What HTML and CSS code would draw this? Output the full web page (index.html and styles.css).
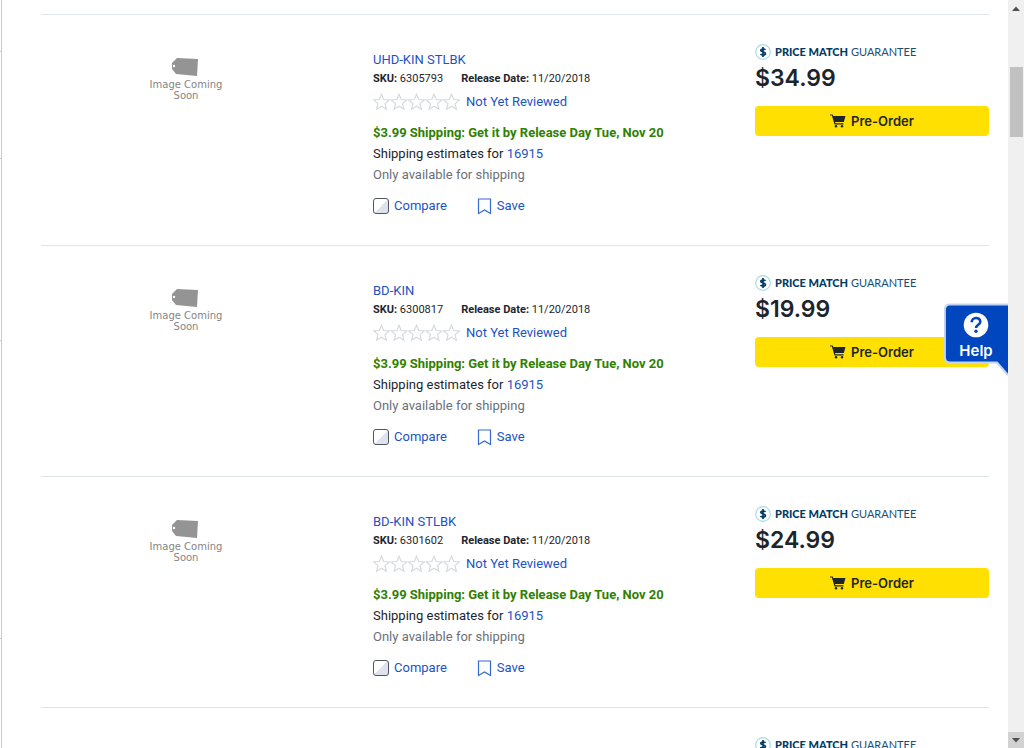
FILE: index.html
```
<!DOCTYPE html>
<html lang="en">
<head>
<meta charset="utf-8">
<title>Search results</title>
<link rel="stylesheet" href="styles.css">
</head>
<body>
<svg class="sprite" aria-hidden="true">
  <symbol id="tag" viewBox="0 0 28 20"><path d="M6 1 27 2 26 19 5 17 1 12 1 6Z" fill="#949494"/><circle cx="3" cy="9" r="1.2" fill="#fff"/></symbol>
  <symbol id="stars" viewBox="0 0 88 18">
    <g fill="#fff" stroke="#d5d9e2" stroke-width="1.2">
      <path id="star" d="M8.5 1.2 10.7 6.5 16.3 6.9 12 10.6 13.4 16.3 8.5 13.2 3.6 16.3 5 10.6 .7 6.9 6.3 6.5Z"/>
      <use href="#star" x="17.5"/><use href="#star" x="35"/><use href="#star" x="52.5"/><use href="#star" x="70"/>
    </g>
  </symbol>
  <symbol id="bookmark" viewBox="0 0 15 17"><path d="M1.5 1H13.5V15.5L7.5 12 1.5 15.5Z" fill="none" stroke="#3569cf" stroke-width="1.2"/></symbol>
  <symbol id="cart" viewBox="0 0 16 14"><path d="M0 .5H2.7L3.3 2H15.5L13.8 8H5L5.4 9.3H13.5V10.4H4.5L1.9 1.6H0Z" fill="#1d252c"/><circle cx="6" cy="12.3" r="1.2" fill="#1d252c"/><circle cx="12" cy="12.3" r="1.2" fill="#1d252c"/></symbol>
  <symbol id="dollar" viewBox="0 0 16 16"><circle cx="8" cy="8" r="7.3" fill="#fff" stroke="#a9dce6" stroke-width="1.2"/><path d="M10.4 5.9C9.8 4.7 5.8 4.5 5.8 6.5 5.8 8.3 10.4 7.5 10.4 9.5 10.4 11.5 6.3 11.2 5.5 10M8 3V13" fill="none" stroke="#003b64" stroke-width="1.7"/></symbol>
</svg>
<div class="window">
  <aside class="edge"><i></i><i></i><i></i><i></i></aside>
  <main class="results">
    <article class="product">
      <div class="picture"><svg class="tag"><use href="#tag"/></svg><span>Image Coming<br>Soon</span></div>
      <div class="details">
        <a class="title" href="#">UHD-KIN STLBK</a>
        <p class="meta"><span><b>SKU:</b> 6305793</span><span><b>Release Date:</b> 11/20/2018</span></p>
        <div class="rating"><svg class="stars"><use href="#stars"/></svg><a href="#">Not Yet Reviewed</a></div>
        <div class="shipping"><p class="offer">$3.99 Shipping: Get it by Release Day Tue, Nov 20</p><p>Shipping estimates for <a href="#">16915</a></p><p class="muted">Only available for shipping</p></div>
        <div class="actions"><label class="compare"><input type="checkbox">Compare</label><button class="save" type="button"><svg class="bookmark"><use href="#bookmark"/></svg>Save</button></div>
      </div>
      <div class="buy">
        <div class="match"><svg class="dollar"><use href="#dollar"/></svg><span><b>PRICE MATCH</b> GUARANTEE</span></div>
        <div class="price">$34.99</div>
        <button class="order" type="button"><svg class="cart"><use href="#cart"/></svg>Pre-Order</button>
      </div>
    </article>
    <article class="product">
      <div class="picture"><svg class="tag"><use href="#tag"/></svg><span>Image Coming<br>Soon</span></div>
      <div class="details">
        <a class="title" href="#">BD-KIN</a>
        <p class="meta"><span><b>SKU:</b> 6300817</span><span><b>Release Date:</b> 11/20/2018</span></p>
        <div class="rating"><svg class="stars"><use href="#stars"/></svg><a href="#">Not Yet Reviewed</a></div>
        <div class="shipping"><p class="offer">$3.99 Shipping: Get it by Release Day Tue, Nov 20</p><p>Shipping estimates for <a href="#">16915</a></p><p class="muted">Only available for shipping</p></div>
        <div class="actions"><label class="compare"><input type="checkbox">Compare</label><button class="save" type="button"><svg class="bookmark"><use href="#bookmark"/></svg>Save</button></div>
      </div>
      <div class="buy">
        <div class="match"><svg class="dollar"><use href="#dollar"/></svg><span><b>PRICE MATCH</b> GUARANTEE</span></div>
        <div class="price">$19.99</div>
        <button class="order" type="button"><svg class="cart"><use href="#cart"/></svg>Pre-Order</button>
      </div>
    </article>
    <article class="product">
      <div class="picture"><svg class="tag"><use href="#tag"/></svg><span>Image Coming<br>Soon</span></div>
      <div class="details">
        <a class="title" href="#">BD-KIN STLBK</a>
        <p class="meta"><span><b>SKU:</b> 6301602</span><span><b>Release Date:</b> 11/20/2018</span></p>
        <div class="rating"><svg class="stars"><use href="#stars"/></svg><a href="#">Not Yet Reviewed</a></div>
        <div class="shipping"><p class="offer">$3.99 Shipping: Get it by Release Day Tue, Nov 20</p><p>Shipping estimates for <a href="#">16915</a></p><p class="muted">Only available for shipping</p></div>
        <div class="actions"><label class="compare"><input type="checkbox">Compare</label><button class="save" type="button"><svg class="bookmark"><use href="#bookmark"/></svg>Save</button></div>
      </div>
      <div class="buy">
        <div class="match"><svg class="dollar"><use href="#dollar"/></svg><span><b>PRICE MATCH</b> GUARANTEE</span></div>
        <div class="price">$24.99</div>
        <button class="order" type="button"><svg class="cart"><use href="#cart"/></svg>Pre-Order</button>
      </div>
    </article>
    <article class="product">
      <div></div>
      <div></div>
      <div class="buy">
        <div class="match"><svg class="dollar"><use href="#dollar"/></svg><span><b>PRICE MATCH</b> GUARANTEE</span></div>
      </div>
    </article>
  </main>
  <div class="scrollbar" aria-hidden="true">
    <svg class="arrow" viewBox="0 0 16 16"><path d="M4 11 8 6.5 12 11Z" fill="#505050"/></svg>
    <div class="thumb"></div>
    <svg class="arrow down" viewBox="0 0 16 16"><path d="M4 6 8 10.5 12 6Z" fill="#505050"/></svg>
  </div>
  <button class="help" type="button">
    <svg class="bubble" viewBox="0 0 64 76" aria-hidden="true"><path d="M64 1.5H6Q.9 1.5 .9 7V54Q.9 59.5 6 59.5H53L64 72" fill="#0046be" stroke="#c3d5f0" stroke-width="2"/></svg>
    <svg class="question" viewBox="0 0 26 26" aria-hidden="true"><circle cx="13" cy="13" r="12.3" fill="#fff"/><path d="M8.7 10.3C8.7 4.7 17.3 4.7 17.3 9.7 17.3 12.7 13 12.7 13 16" fill="none" stroke="#0046be" stroke-width="2.6"/><circle cx="13" cy="19.3" r="1.7" fill="#0046be"/></svg>
    <span>Help</span>
  </button>
</div>
</body>
</html>
```
FILE: styles.css
```
* { box-sizing: border-box; }
body { margin: 0; background: #fff; color: #1d252c; font: 13px/20px Inter, "Liberation Sans", sans-serif; }
p { margin: 0; }
a { color: #1d52c4; text-decoration: none; }
button { border: 0; padding: 0; background: none; font: inherit; cursor: pointer; }
svg { display: block; flex: none; }
.sprite { position: absolute; width: 0; height: 0; }
.window { position: relative; display: flex; height: 100vh; overflow: hidden; }
.edge { width: 2px; border-right: 1px solid #c5cbd5; display: grid; grid-template-rows: 52px 107px 182px 298px; align-content: start; }
.edge i { border-bottom: 1px solid #c5cbd5; }
.results { flex: 1; min-width: 0; padding: 14px 19px 0 39px; }
.product { display: grid; grid-template-columns: 290fr 340fr 234fr; column-gap: 42px; border-top: 1px solid #dfe4eb; padding: 29px 0; }
.picture { display: flex; flex-direction: column; align-items: center; padding-top: 13px; color: #858585; font: 10px/11px "DejaVu Sans", sans-serif; text-align: center; }
.tag { width: 28px; height: 20px; margin: 0 2px 2px 0; }
.details { padding-top: 7px; white-space: nowrap; font-family: Roboto, "Liberation Sans", sans-serif; }
.title { display: block; line-height: 18px; }
.meta { display: flex; gap: 18px; margin-top: 2px; font-size: 11px; line-height: 16px; }
.meta b { font-weight: 700; }
.rating { display: flex; align-items: center; gap: 5px; margin-top: 5px; }
.stars { width: 88px; height: 18px; }
.shipping { margin-top: 10px; line-height: 21px; }
.offer { color: #318000; font-weight: 700; }
.muted { color: #6b7178; }
.actions { display: flex; align-items: center; gap: 30px; margin-top: 11px; height: 20px; color: #1d52c4; }
.compare, .save { display: flex; align-items: center; gap: 5px; color: inherit; }
.compare input { appearance: none; width: 16px; height: 16px; margin: 0; border: 1px solid #505661; border-radius: 3px; background: linear-gradient(135deg, #fff 50%, #dfe3ed 50%); }
.bookmark { width: 15px; height: 17px; }
.match { display: flex; align-items: center; gap: 4px; height: 16px; color: #1c4d72; font: 11px/16px Lato, sans-serif; white-space: nowrap; }
.match b { color: #003b64; font-weight: 900; }
.dollar { width: 16px; height: 16px; }
.price { margin-top: 3px; font-size: 23px; line-height: 30px; font-weight: 600; }
.order { display: flex; justify-content: center; align-items: center; gap: 5px; width: 100%; height: 30px; margin-top: 13px; border-radius: 4px; background: #ffe000; color: #1d252c; font-weight: 600; }
.cart { width: 16px; height: 14px; }
.scrollbar { width: 16px; background: #f0f0f0; display: grid; grid-template-rows: 16px 51px 70px 1fr 16px; }
.arrow { width: 16px; height: 16px; }
.thumb { grid-row: 3; margin: 0 1px 0 2px; background: #c1c1c1; }
.down { grid-row: 5; background: #d2d2d2; }
.help { position: absolute; right: 16px; top: 303px; width: 64px; height: 76px; display: flex; flex-direction: column; align-items: center; padding-top: 9px; color: #fff; font-size: 15px; font-weight: 600; }
.bubble { position: absolute; inset: 0; width: 64px; height: 76px; }
.question { position: relative; width: 26px; height: 26px; }
.help span { position: relative; margin-top: 3px; }
```
